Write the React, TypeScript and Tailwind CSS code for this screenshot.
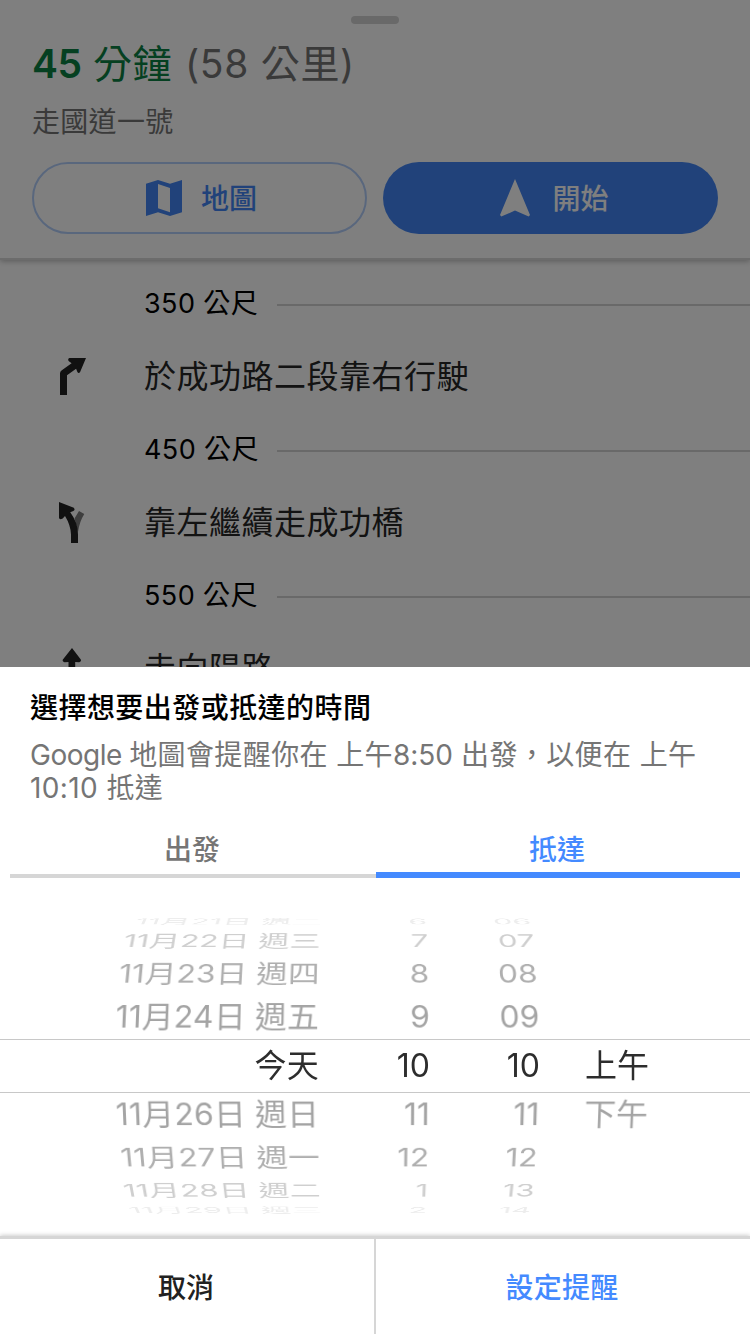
// Directions screen with the departure / arrival reminder sheet

import type { ReactNode } from 'react';
import clsx from 'clsx';

const STEP_ANGLE = 17.6;
const DRUM_RADIUS = 162;

const pickerRows = [
  { offset: -4, date: '11月21日 週二', hour: '6', minute: '06', period: '', color: 'text-[#ededed]' },
  { offset: -3, date: '11月22日 週三', hour: '7', minute: '07', period: '', color: 'text-[#cfcfcf]' },
  { offset: -2, date: '11月23日 週四', hour: '8', minute: '08', period: '', color: 'text-[#afafaf]' },
  { offset: -1, date: '11月24日 週五', hour: '9', minute: '09', period: '', color: 'text-[#a4a4a4]' },
  { offset: 0, date: '今天', hour: '10', minute: '10', period: '上午', color: 'text-[#2d2d2d]' },
  { offset: 1, date: '11月26日 週日', hour: '11', minute: '11', period: '下午', color: 'text-[#a4a4a4]' },
  { offset: 2, date: '11月27日 週一', hour: '12', minute: '12', period: '', color: 'text-[#afafaf]' },
  { offset: 3, date: '11月28日 週二', hour: '1', minute: '13', period: '', color: 'text-[#cfcfcf]' },
  { offset: 4, date: '11月29日 週三', hour: '2', minute: '14', period: '', color: 'text-[#ededed]' },
];

function MapIcon() {
  return (
    <svg width="36" height="36" viewBox="0 0 36 36" fill="#4285f4">
      <path fillRule="evenodd" d="M0 3.7 12 0l12 3.7L36 0v32.3L24 36l-12-3.7L0 36zM12 4v24.3l12 3.9V8z" />
    </svg>
  );
}

function NavigationIcon() {
  return (
    <svg width="30" height="38" viewBox="0 0 30 38" fill="#fff">
      <path d="M15 0 30 36l-1.3 1.6L15 31.6 1.3 37.6 0 36z" />
    </svg>
  );
}

function SlightRightIcon() {
  return (
    <svg width="48" height="48" viewBox="0 0 48 48" fill="#222">
      <path d="M12 43V21.5q0-1.8 1.5-2.9l10.1-7.3-3-2.2q-1.1-2.6.8-3.1H38l-6 14.3q-1.6 1.6-2.7-.5l-1.2-3.1L19 23.3V43z" />
    </svg>
  );
}

function KeepLeftIcon() {
  return (
    <svg width="48" height="48" viewBox="0 0 48 48">
      <path d="M26.5 20.5 31 13l5.3 3q-4.8 7.5-6.3 18z" fill="#7d7d7d" />
      <path d="M23 45V36.5Q22.6 27 17 18l-2.3 2.6q-3.3 1.3-3.7-.6V4l14.8 5.7q1.7 2.3-.4 3.2l-3.2 1.4Q30 24.5 30 36.5V45z" fill="#222" />
    </svg>
  );
}

function StraightIcon() {
  return (
    <svg width="48" height="48" viewBox="0 0 48 48" fill="#222">
      <path d="M20.5 46V18l-4 .2q-2.6-.7-1.6-2.7L24 4l8.8 11.5q.8 2.2-1.6 2.7l-4-.2V46z" />
    </svg>
  );
}

function Distance({ children }: { children: ReactNode }) {
  return (
    <div className="ml-[144px] flex h-[74px] items-center">
      <span className="w-[133px] whitespace-nowrap text-[27px] tracking-[0.4px] text-black">{children}</span>
      <span className="mt-[2px] h-[2px] flex-1 bg-[#d2d2d2]" />
    </div>
  );
}

function Step({ icon, children }: { icon: ReactNode; children: ReactNode }) {
  return (
    <div className="flex h-[72px] items-center">
      <span className="-mt-[2px] w-[96px] pl-12">{icon}</span>
      <span className="ml-12 whitespace-nowrap text-[32px] tracking-[0.5px] text-[#262626]">{children}</span>
    </div>
  );
}

function TimePicker() {
  return (
    <div className="relative mt-[39px] h-[298px]">
      <div className="grid h-[297px] overflow-hidden [perspective:1867px]">
        {pickerRows.map((row) => (
          <div
            key={row.offset}
            className={clsx(
              'col-start-1 row-start-1 flex h-10 items-center self-center whitespace-nowrap text-[32px] leading-10',
              row.color,
            )}
            style={{
              transform: `translateZ(-${DRUM_RADIUS}px) rotateX(${-row.offset * STEP_ANGLE}deg) translateZ(${DRUM_RADIUS}px)`,
            }}
          >
            <span className="w-[319px] text-right tracking-[0.2px]">{row.date}</span>
            <span className="w-[111px] text-right">{row.hour}</span>
            <span className="w-[110px] text-right">{row.minute}</span>
            <span className="ml-[45px]">{row.period}</span>
          </div>
        ))}
      </div>
      <div className="pointer-events-none absolute inset-x-0 top-[122px] h-[54px] border-y border-[#c8c8c8]" />
    </div>
  );
}

export default function App() {
  return (
    <div className="flex h-[1334px] w-[750px] flex-col overflow-hidden bg-white font-['Inter','Noto_Sans_CJK_TC',sans-serif]">
      <main className="relative h-[667px] overflow-hidden">
        <header className="h-[258px] px-8 pt-4 shadow-[0_2px_0_#d8d8d8,0_3px_6px_#b0b0b0]">
          <div className="mx-auto h-2 w-12 rounded-full bg-[#d3d3d3]" />
          <h1 className="mt-[14px] flex h-[52px] items-center gap-[13px] whitespace-nowrap text-[39px] tracking-[0.4px] text-[#757575]">
            <span className="text-[#0b8043]">
              <b className="font-semibold tracking-[-0.4px]">45</b> 分鐘
            </span>
            <span className="tracking-[0.7px]">(58 公里)</span>
          </h1>
          <p className="mt-3 h-10 text-[28px] leading-10 tracking-[0.3px] text-[#757575]">走國道一號</p>
          <div className="mt-5 flex gap-4">
            <button className="flex h-[72px] flex-1 items-center justify-center gap-[19px] rounded-full border-2 border-[#b3cefb] pl-1 text-[28px] font-medium text-[#4285f4]">
              <MapIcon />
              <span className="pt-[2px]">地圖</span>
            </button>
            <button className="flex h-[72px] flex-1 items-center justify-center gap-[22px] rounded-full bg-[#4285f4] pl-2 text-[28px] font-medium text-white">
              <NavigationIcon />
              <span className="pt-[2px]">開始</span>
            </button>
          </div>
        </header>
        <section className="pt-[9px]">
          <Distance>350 公尺</Distance>
          <Step icon={<SlightRightIcon />}>於成功路二段靠右行駛</Step>
          <Distance>450 公尺</Distance>
          <Step icon={<KeepLeftIcon />}>靠左繼續走成功橋</Step>
          <Distance>550 公尺</Distance>
          <Step icon={<StraightIcon />}>走向陽路</Step>
        </section>
        <div className="absolute inset-0 bg-black/50" />
      </main>

      <section className="flex h-[667px] flex-col bg-white">
        <div className="h-[149px] px-[30px] pt-[21px]">
          <h2 className="h-10 text-[28px] font-medium leading-10 tracking-[0.45px] text-black">選擇想要出發或抵達的時間</h2>
          <p className="mt-[11px] whitespace-nowrap text-[28px] leading-[33px] tracking-[0.4px] text-[#757575]">
            <span className="tracking-[-0.5px]">Google </span>地圖會提醒你在 上午<span className="tracking-[-0.1px]">8:50</span> 出發，以便在 上午
            <br />
            10:10 抵達
          </p>
        </div>
        <div className="mx-[10px] flex h-[62px] items-end text-[28px] font-medium">
          <button className="h-[62px] w-[366px] border-b-4 border-[#d6d6d6] pr-[2px] pt-[10px] text-[#757575]">出發</button>
          <button className="h-[62px] flex-1 border-b-[6px] border-[#448aff] pr-[2px] pt-3 text-[#448aff]">抵達</button>
        </div>
        <TimePicker />
        <div className="mt-[21px] flex flex-1 border-t-[3px] border-[#d6d6d6] text-[28px] font-medium shadow-[0_-1px_4px_#cfcfcf]">
          <button className="w-[376px] border-r-2 border-[#d6d6d6] pr-[2px] pt-[2px] text-[#212121]">取消</button>
          <button className="flex-1 pr-[2px] pt-[2px] tracking-[0.3px] text-[#448aff]">設定提醒</button>
        </div>
      </section>
    </div>
  );
}
